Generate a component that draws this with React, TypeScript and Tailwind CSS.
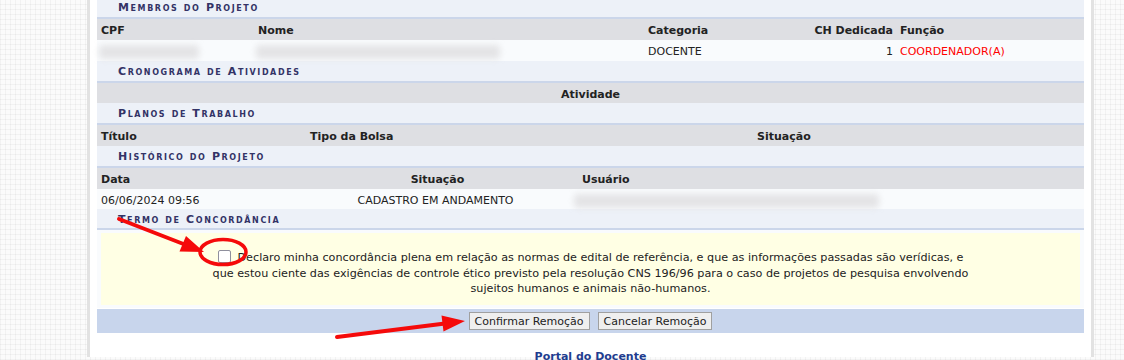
import React from "react";

const font = "font-['DejaVu_Sans',Verdana,sans-serif]";

const Section: React.FC<{ title: string; h: string; first?: boolean }> = ({ title, h, first }) => (
  <div
    className={`${h} flex items-center pt-[2px] leading-[14px] pl-[21px] bg-[#edf1f8] border-b-2 border-[#cbd6ea] text-[#333366] text-[11px] font-bold tracking-[1.6px] [font-variant:small-caps] ${first ? "-mt-[3px]" : ""}`}
  >
    {title}
  </div>
);

const Blur: React.FC<{ w: string }> = ({ w }) => (
  <div className={`${w} h-[14px] bg-[#e4e4e6] blur-[3px] rounded-sm`} />
);

const row = "items-center pt-[3px] leading-[14px]";

export default function App() {
  return (
    <div
      className={`${font} relative w-[1124px] h-[360px] overflow-hidden bg-[#fbfbfb] bg-[linear-gradient(90deg,rgba(0,0,0,0.035)_1px,transparent_1px),linear-gradient(0deg,rgba(0,0,0,0.035)_1px,transparent_1px)] bg-[size:5px_5px] text-[11px] text-[#222]`}
    >
      <div className="ml-[87px] w-[1007px] h-full bg-white border-x-[3px] border-[#e2e2e2] px-[7px]">
        <Section title="Membros do Projeto" h="h-[22px]" first />
        <div className={`grid grid-cols-[157px_390px_156px_97px_1fr] h-[21px] ${row} bg-[#dedfe3] font-bold`}>
          <div className="pl-1">CPF</div>
          <div className="pl-1">Nome</div>
          <div className="pl-1">Categoria</div>
          <div className="pr-1 text-right">CH Dedicada</div>
          <div className="pl-[3px]">Função</div>
        </div>
        <div className={`grid grid-cols-[157px_390px_156px_97px_1fr] h-[21px] ${row} bg-[#f9fbfd]`}>
          <div className="pl-[2px]"><Blur w="w-[100px]" /></div>
          <div className="pl-[2px]"><Blur w="w-[244px]" /></div>
          <div className="pl-1">DOCENTE</div>
          <div className="pr-1 text-right">1</div>
          <div className="pl-[3px] text-[#ff0000]">COORDENADOR(A)</div>
        </div>

        <Section title="Cronograma de Atividades" h="h-[22px]" />
        <div className={`h-[20px] flex ${row} justify-center bg-[#dedfe3] font-bold`}>Atividade</div>

        <Section title="Planos de Trabalho" h="h-[22px]" />
        <div className={`grid grid-cols-[209px_447px_1fr] h-[21px] ${row} bg-[#dedfe3] font-bold`}>
          <div className="pl-1">Título</div>
          <div className="pl-1">Tipo da Bolsa</div>
          <div className="pl-1">Situação</div>
        </div>

        <Section title="Histórico do Projeto" h="h-[22px]" />
        <div className={`grid grid-cols-[200px_281px_1fr] h-[21px] ${row} bg-[#dedfe3] font-bold`}>
          <div className="pl-1">Data</div>
          <div className="text-center">Situação</div>
          <div className="pl-1">Usuário</div>
        </div>
        <div className={`grid grid-cols-[200px_277px_1fr] h-[20px] ${row} bg-[#f9fbfd]`}>
          <div className="pl-1">06/06/2024 09:56</div>
          <div className="text-center">CADASTRO EM ANDAMENTO</div>
          <div><Blur w="w-[305px]" /></div>
        </div>

        <Section title="Termo de Concordância" h="h-[21px]" />
        <div className="bg-[#f9fbfd] p-[3px] pl-[4px] pr-[4px]">
          <div className="bg-[#ffffe4] h-[72px] pt-[17px] text-center text-[11.2px] leading-[15.5px] text-[#222]">
            <span className="inline-block align-[-2px] w-[13px] h-[13px] border border-[#8f8f9d] rounded-[2px] bg-white mr-[7px]" />
            Declaro minha concordância plena em relação as normas de edital de referência, e que as informações passadas são verídicas, e
            <br />
            que estou ciente das exigências de controle ético previsto pela resolução CNS 196/96 para o caso de projetos de pesquisa envolvendo
            <br />
            sujeitos humanos e animais não-humanos.
          </div>
        </div>
        <div className="mt-px h-[24px] bg-[#c8d5ec] flex items-center justify-center gap-[8px]">
          <button className="h-[18px] px-[5px] bg-[#efefef] border border-[#a0a0a0] text-[11px] text-[#222] leading-none">
            Confirmar Remoção
          </button>
          <button className="h-[18px] px-[5px] bg-[#efefef] border border-[#a0a0a0] text-[11px] text-[#222] leading-none">
            Cancelar Remoção
          </button>
        </div>

        <div className="mt-[16px] text-center font-bold text-[#1f3d8f]">Portal do Docente</div>
      </div>

      <svg className="absolute inset-0 pointer-events-none" width="1124" height="360" viewBox="0 0 1124 360">
        <line x1="119" y1="219" x2="186" y2="245" stroke="#f50a0a" strokeWidth="4" strokeLinecap="round" />
        <polygon points="204,252 179.5,251.5 186,236" fill="#f50a0a" />
        <ellipse cx="223" cy="252" rx="23" ry="12.5" fill="none" stroke="#f50a0a" strokeWidth="3.5" />
        <line x1="337" y1="337" x2="445" y2="323.5" stroke="#f50a0a" strokeWidth="4" strokeLinecap="round" />
        <polygon points="465,321 443.5,331.5 441.5,315.5" fill="#f50a0a" />
      </svg>
    </div>
  );
}
